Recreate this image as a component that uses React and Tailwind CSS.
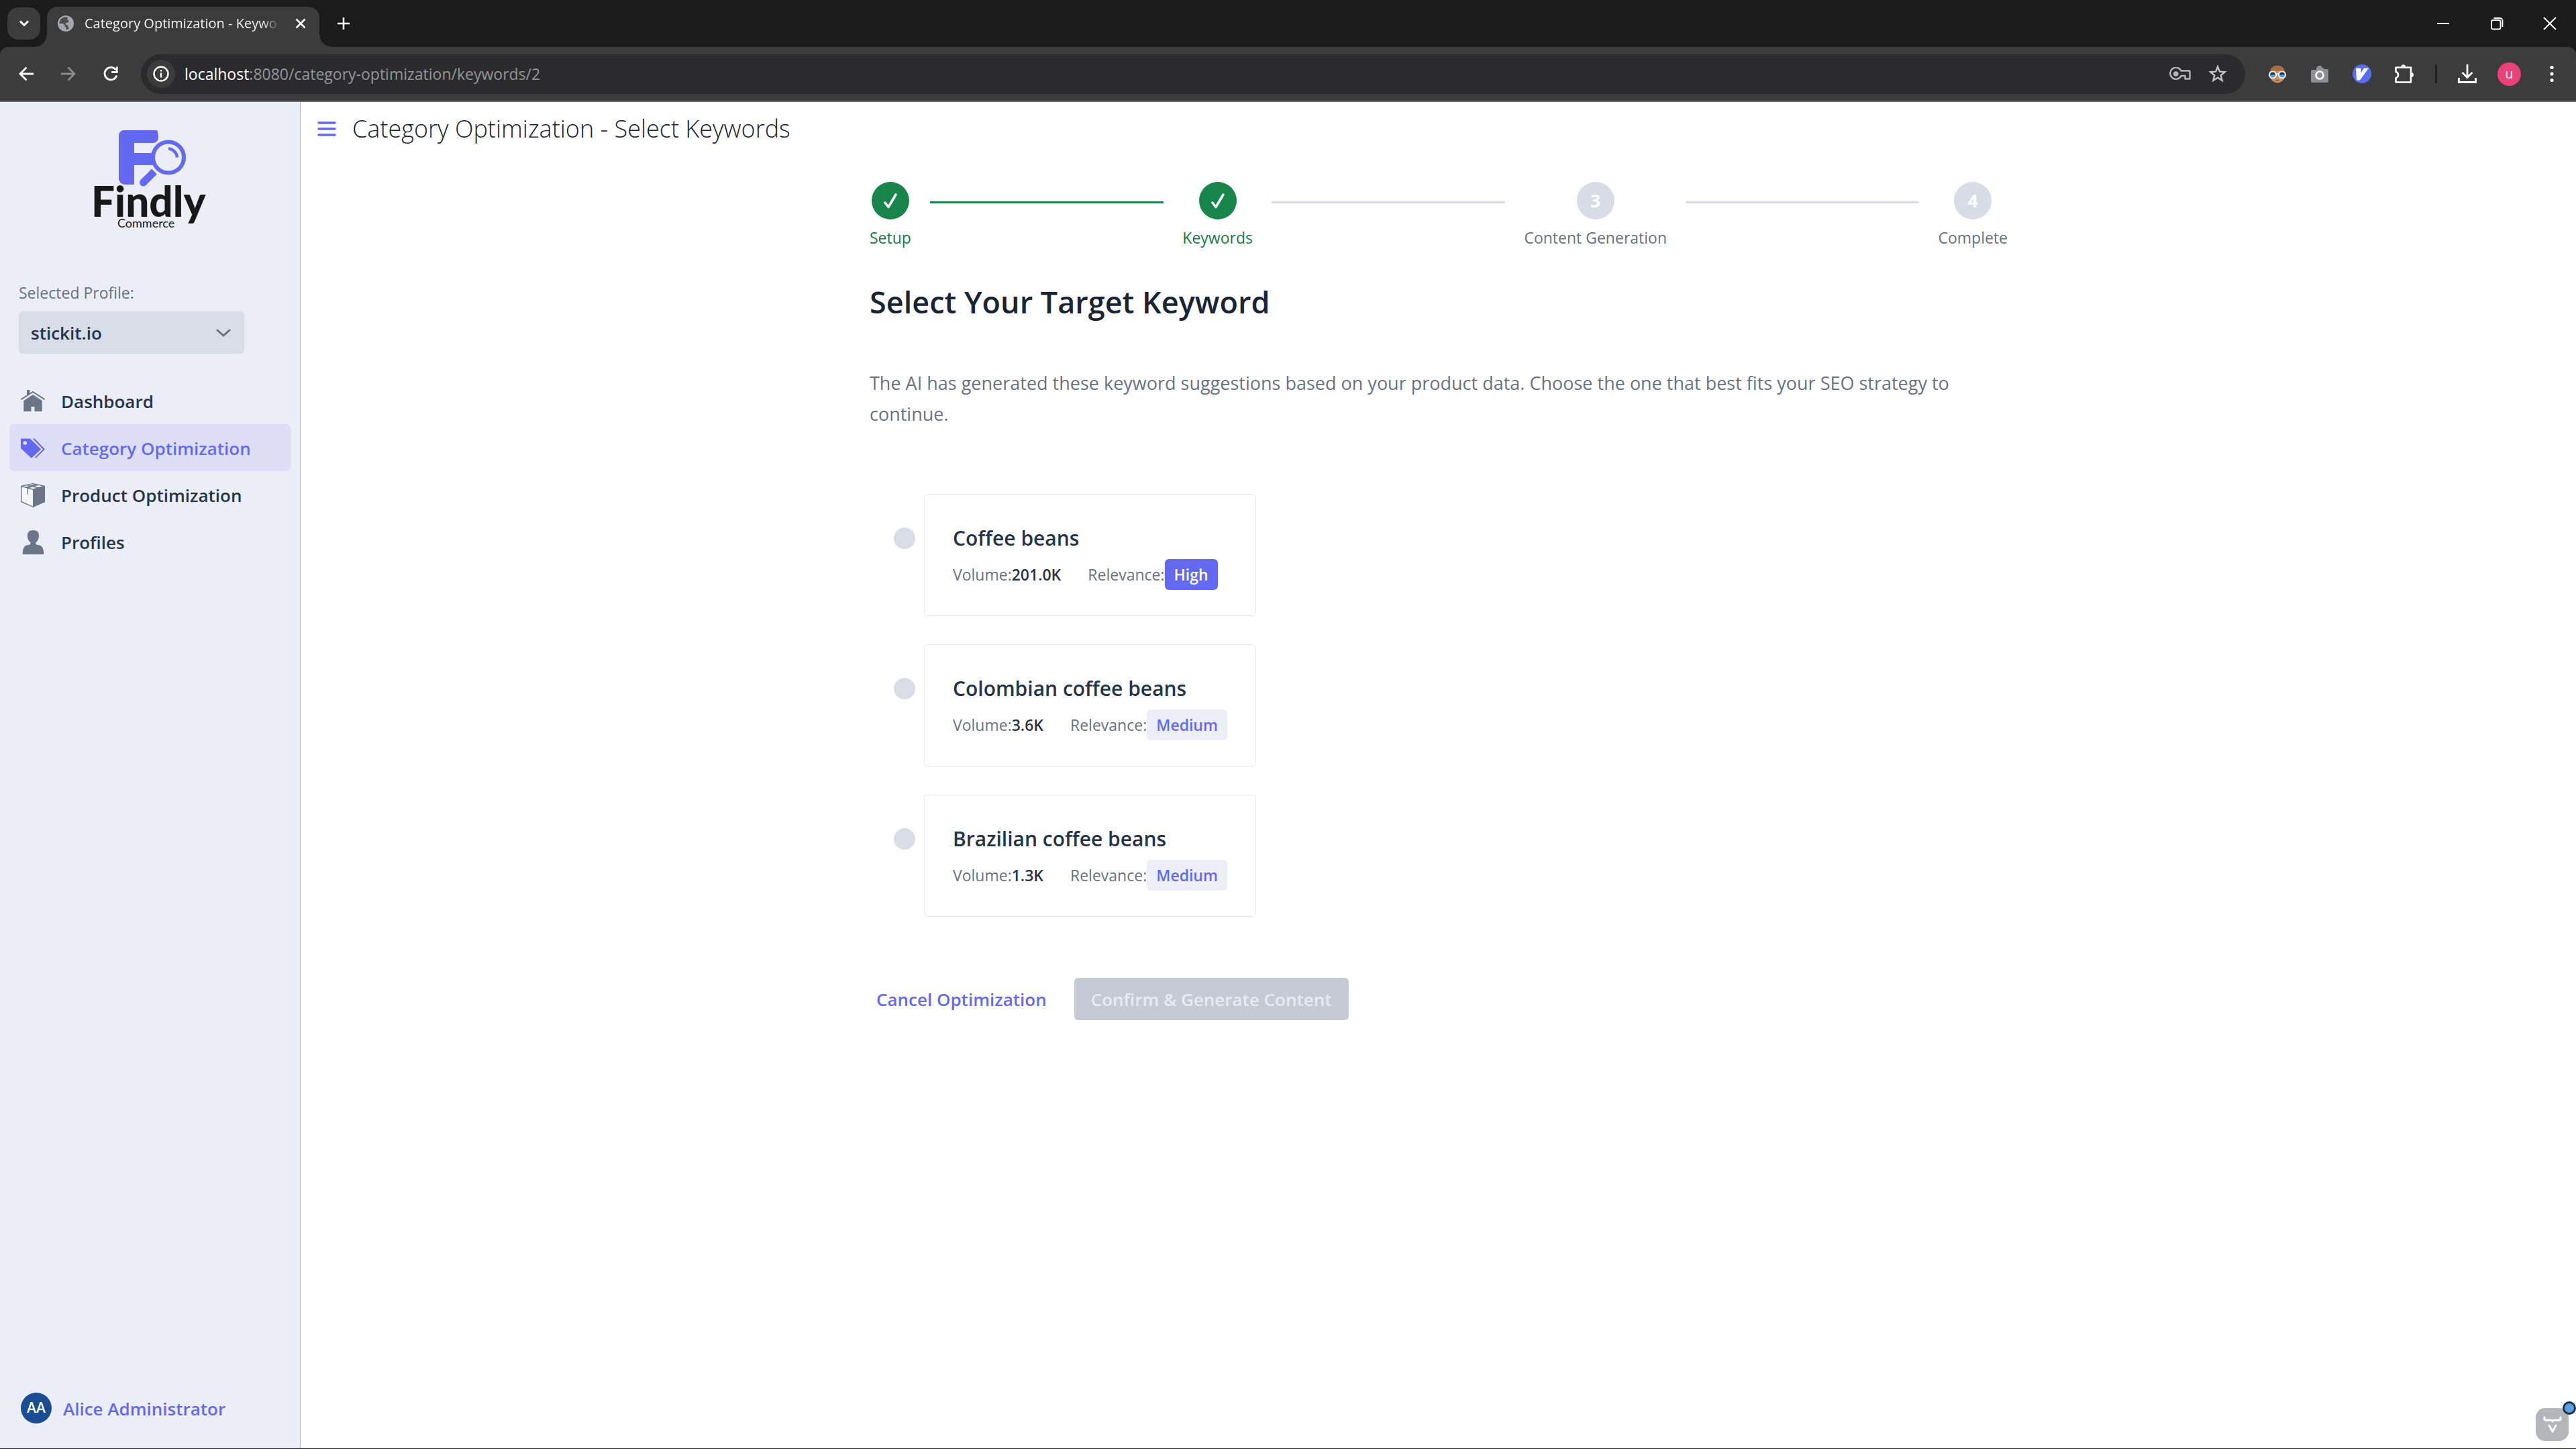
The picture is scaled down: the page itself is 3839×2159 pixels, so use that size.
import { Fragment, useState } from "react";
import clsx from "clsx";

const NAV = [
  { label: "Dashboard", href: "#dashboard", icon: HomeIcon },
  { label: "Category Optimization", href: "#category-optimization", icon: TagsIcon },
  { label: "Product Optimization", href: "#product-optimization", icon: PackageIcon },
  { label: "Profiles", href: "#profiles", icon: UserIcon },
];

const STEPS = [
  { label: "Setup", done: true },
  { label: "Keywords", done: true },
  { label: "Content Generation", done: false },
  { label: "Complete", done: false },
];

const KEYWORDS = [
  { name: "Coffee beans", volume: "201.0K", relevance: "High" },
  { name: "Colombian coffee beans", volume: "3.6K", relevance: "Medium" },
  { name: "Brazilian coffee beans", volume: "1.3K", relevance: "Medium" },
];

/* ---------- sidebar icons ---------- */

function HomeIcon() {
  return (
    <svg viewBox="0 0 16 16" className="size-9" fill="currentColor">
      <path d="M8 1.2 6 2.5V.4H4v3.4L0 6.3l.5.8L8 2.2l7.5 4.9.5-.8z" />
      <path d="M8 3.5 1.9 7.6v7.1h5v-3.2h2.2v3.2h5V7.6z" />
    </svg>
  );
}

function TagsIcon() {
  return (
    <svg viewBox="0 0 16 16" className="size-9" fill="currentColor">
      <path
        fillRule="evenodd"
        d="M0 1.5V8l7.1 6.6 6.3-6-7.2-7.1zm2.8 1.7a1.25 1.25 0 1 1 0 2.5 1.25 1.25 0 0 1 0-2.5z"
      />
      <path d="M7.8 1.5h1.4L16 8.6l-6 6-.6-.6 5.3-5.4z" />
    </svg>
  );
}

function PackageIcon() {
  return (
    <svg viewBox="0 0 16 16" className="size-9">
      <path d="M8 .3.3 1.9v10.3L8 15.6l7.7-3.4V1.9z" fill="#f4f6fa" stroke="currentColor" strokeWidth=".6" />
      <path d="M8 4.1 16 1.9v10.4L8 16z" fill="currentColor" />
      <path
        d="M.3 1.9 8 4.1l7.7-2.2M4.2 1.2l7.6 2M11.8 1 4.6 3v4.4M3.4 2.7 10 .8"
        fill="none"
        stroke="currentColor"
        strokeWidth=".6"
      />
    </svg>
  );
}

function UserIcon() {
  return (
    <svg viewBox="0 0 16 16" className="size-9" fill="currentColor">
      <path d="M8.2 0C5.8 0 4.4 1.2 4.4 3.3c0 1.9.5 3.7 2 4.7v1.1c-.3.5-.9.7-1.9.8C2.2 10.1 1.3 12 1.2 16h14c-.1-4-1-5.9-3.3-6.1-1-.1-1.6-.3-1.900-.8V8c1.500-1 2-2.800 2-4.700C12 1.200 10.600 0 8.200 0z" />
    </svg>
  );
}

function Logo() {
  return (
    <svg viewBox="0 0 176 156" className="mx-auto h-[156px] w-[176px]" role="img" aria-label="Findly Commerce">
      <g fill="#6469f1">
        <rect x="41" y="4" width="23" height="81" rx="9" />
        <rect x="52" y="30" width="12" height="55" />
        <rect x="41" y="4" width="59" height="19" rx="8" />
        <rect x="80" y="4" width="19" height="9" rx="2" />
      </g>
      <circle cx="115" cy="44.5" r="28.5" fill="#ebeef6" />
      <path d="M55 38h37v18H55z" fill="#6469f1" />
      <circle cx="115" cy="44.5" r="23" fill="#ebeef6" stroke="#6469f1" strokeWidth="6" />
      <path d="M115 31.5a14 14 0 0 1 13 13" fill="none" stroke="#6469f1" strokeWidth="4.5" />
      <path d="m94 65.5-16.500 16.500" stroke="#6469f1" strokeWidth="11" />
      <circle cx="77.5" cy="82" r="5.5" fill="#6469f1" />
      <text x="0" y="133" className="font-[Lato] text-[62px] font-black" fill="#181818">Findly</text>
      <text x="39" y="149" className="font-[Lato] text-[18px]" fill="#181818">Commerce</text>
    </svg>
  );
}

/* ---------- browser frame ---------- */

function IconButton({ label, className, children }) {
  return (
    <button type="button" aria-label={label} className={clsx("flex h-[58px] items-center justify-center", className)}>
      {children}
    </button>
  );
}

function TabStrip() {
  return (
    <div className="flex h-[70px] bg-[#1b1b1b] text-white">
      <button
        type="button"
        aria-label="Search tabs"
        className="mt-[11px] ml-[11px] flex h-12 w-[49px] items-center justify-center rounded-[16px] bg-[#3c3c3c]"
      >
        <svg viewBox="0 0 16 16" className="size-4" fill="none" stroke="currentColor" strokeWidth="3">
          <path d="m2 4.5 6 6 6-6" />
        </svg>
      </button>
      <div className="-ml-2 size-[18px] self-end bg-[radial-gradient(circle_at_0_0,transparent_17px,#3c3c3c_18px)]" />
      <div className="mt-[10px] flex w-[406px] items-center rounded-t-[16px] bg-[#3c3c3c] pb-[10px] pl-4">
        <svg viewBox="0 0 24 24" className="size-6 shrink-0">
          <circle cx="12" cy="12" r="12" fill="#a3a6aa" />
          <path
            d="M12 2.500C6 2.500 2.500 7 2.500 12l5 .2 3 1.800v2.500l2 1v4l4-1.500-1-4.500-4-2.500 1-2 3-.5 1.500-2.500-3-2 1-3z"
            fill="#4c4e52"
          />
        </svg>
        <span className="ml-4 w-[292px] overflow-hidden bg-linear-to-r from-white from-90% to-transparent bg-clip-text text-[20px] whitespace-nowrap text-transparent">
          Category Optimization - Keywo
        </span>
        <button type="button" aria-label="Close tab" className="ml-[21px] flex size-[18px] items-center justify-center">
          <svg viewBox="0 0 16 16" className="size-4" stroke="currentColor" strokeWidth="2.5">
            <path d="m1.500 1.500 13 13m0-13-13 13" />
          </svg>
        </button>
      </div>
      <div className="size-[18px] self-end bg-[radial-gradient(circle_at_100%_0,transparent_17px,#3c3c3c_18px)]" />
      <button type="button" aria-label="New tab" className="ml-2 flex w-5 items-center justify-center">
        <svg viewBox="0 0 20 20" className="size-5" stroke="currentColor" strokeWidth="2.5">
          <path d="M10 1v18M1 10h18" />
        </svg>
      </button>
      <div className="ml-auto flex">
        <button type="button" aria-label="Minimize" className="flex w-20 items-center justify-center">
          <svg viewBox="0 0 20 20" className="size-5" stroke="currentColor" strokeWidth="2">
            <path d="M1 10h18" />
          </svg>
        </button>
        <button type="button" aria-label="Restore" className="flex w-20 items-center justify-center">
          <svg viewBox="0 0 20 20" className="size-5" fill="none" stroke="currentColor" strokeWidth="1.8">
            <rect x="2" y="5" width="13.5" height="13.5" rx="2.5" />
            <path d="M5.5 2h9a4 4 0 0 1 4 4v9" />
          </svg>
        </button>
        <button type="button" aria-label="Close" className="flex w-[78px] items-center justify-center">
          <svg viewBox="0 0 20 20" className="size-5" stroke="currentColor" strokeWidth="1.8">
            <path d="m1 1 18 18m0-18L1 19" />
          </svg>
        </button>
      </div>
    </div>
  );
}

function Toolbar() {
  return (
    <div className="bg-[#1b1b1b]">
      <div className="flex h-[82px] items-center rounded-t-[12px] border-b-2 border-[#6a6a6a] bg-[#3c3c3c] pr-[5px] pl-[7px] text-white">
        <IconButton label="Back" className="w-[63px]">
          <svg viewBox="0 0 24 24" className="size-6" fill="none" stroke="currentColor" strokeWidth="2.8">
            <path d="M23 12H3m9.500-9.500L3 12l9.500 9.500" />
          </svg>
        </IconButton>
        <IconButton label="Forward" className="w-[63px] text-[#8b8c8f]">
          <svg viewBox="0 0 24 24" className="size-6" fill="none" stroke="currentColor" strokeWidth="2.8">
            <path d="M1 12h20m-9.500-9.500L21 12l-9.500 9.500" />
          </svg>
        </IconButton>
        <IconButton label="Reload" className="w-[63px]">
          <svg viewBox="0 0 24 24" className="size-6" fill="none" stroke="currentColor" strokeWidth="2.8">
            <path d="M21 14.500A9.200 9.200 0 1 1 19.500 6" />
            <path d="M21.200 1.500v8h-8" />
          </svg>
        </IconButton>

        <div className="ml-[14px] flex h-[59px] flex-1 items-center rounded-full bg-[#2b2b2d] pr-[13px] pl-[9px]">
          <button
            type="button"
            aria-label="Site information"
            className="flex size-[42px] items-center justify-center rounded-full bg-[#3c3c3c]"
          >
            <svg viewBox="0 0 24 24" className="size-6" fill="none" stroke="currentColor" strokeWidth="2.4">
              <circle cx="12" cy="12" r="10.5" />
              <path d="M12 10.500v7M12 6v2.600" />
            </svg>
          </button>
          <div className="ml-[14px] flex-1 text-[23px] text-[#94959a]">
            <span className="text-white">localhost</span>:8080/category-optimization/keywords/2
          </div>
          <IconButton label="Passwords" className="w-14 text-[#b6b8bb]">
            <svg viewBox="0 0 32 20" className="h-5 w-8" fill="none" stroke="currentColor" strokeWidth="2.4">
              <path
                d="M17.500 5.500H29a1.500 1.500 0 0 1 1.500 1.500v10.500h-7V13h-6A8.600 8.600 0 1 1 17.500 5.500z"
                strokeLinejoin="round"
              />
              <circle cx="9.7" cy="10" r="3.8" fill="currentColor" stroke="none" />
            </svg>
          </IconButton>
          <IconButton label="Bookmark this page" className="w-14 text-[#c4c6c9]">
            <svg viewBox="0 0 28 28" className="size-7" fill="none" stroke="currentColor" strokeWidth="2.4">
              <path d="m14 3.500 2.900 7.200 7.800.6-6 5 1.900 7.500-6.600-4.100-6.600 4.100 1.900-7.500-6-5 7.800-.6z" />
            </svg>
          </IconButton>
        </div>

        <IconButton label="Reader extension" className="ml-4 w-[63px]">
          <svg viewBox="0 0 28 28" className="size-7">
            <ellipse cx="14" cy="15" rx="11.5" ry="12.5" fill="#c98f63" />
            <path d="M2.500 12C3.500 5 8 1.500 14 1.500S24.500 5 25.500 12l-6-2.500h-11z" fill="#a86f47" />
            <circle cx="7" cy="15.5" r="4.8" fill="#5b9bd0" />
            <circle cx="21" cy="15.5" r="4.8" fill="#5b9bd0" />
            <path d="M2.200 15.500a4.800 4.800 0 0 1 9.600 0zM16.200 15.500a4.800 4.800 0 0 1 9.600 0z" fill="#2b3d55" />
            <circle cx="7" cy="15.5" r="5" fill="none" stroke="#e9eef3" strokeWidth="2.2" />
            <circle cx="21" cy="15.5" r="5" fill="none" stroke="#e9eef3" strokeWidth="2.2" />
            <path d="M12 14.500h4" stroke="#e9eef3" strokeWidth="2" />
            <path d="M11.500 23.500h5" stroke="#8c4f37" strokeWidth="1.5" />
          </svg>
        </IconButton>
        <IconButton label="Screenshot extension" className="w-[63px]">
          <svg viewBox="0 0 28 28" className="size-7">
            <path
              d="M3 8h6V5l3-3h4l2 3h2v2h5a2 2 0 0 1 2 2v16a2 2 0 0 1-2 2H3a2 2 0 0 1-2-2V10a2 2 0 0 1 2-2z"
              fill="#8e9095"
            />
            <circle cx="14" cy="16" r="5.5" fill="#8e9095" stroke="#fff" strokeWidth="2.6" />
          </svg>
        </IconButton>
        <IconButton label="Vimium extension" className="w-[63px]">
          <svg viewBox="0 0 28 28" className="size-7">
            <circle cx="14" cy="14" r="14" fill="#5a6cf0" />
            <path d="M5 5.500h7.500V12.500L17 5.500h7L11 23.500H6z" fill="#fff" />
          </svg>
        </IconButton>
        <IconButton label="Extensions" className="w-[63px]">
          <svg
            viewBox="0 0 28 28"
            className="size-7"
            fill="none"
            stroke="currentColor"
            strokeWidth="2.6"
            strokeLinejoin="round"
          >
            <path d="M1.500 4.500h22.500v22H1.500v-6.500q3.500-1 3.500-4.500t-3.500-4.500z" />
            <path
              d="M9.500 3.500a3.200 3.200 0 0 1 6.400 0zM24.500 12a3.400 3.400 0 0 1 0 6.800z"
              fill="currentColor"
              stroke="none"
            />
          </svg>
        </IconButton>
        <div className="mr-[13px] ml-[15px] h-7 w-[3px] rounded-full bg-[#1f1f20]" />
        <IconButton label="Downloads" className="w-[63px]">
          <svg viewBox="0 0 28 28" className="size-7" fill="none" stroke="currentColor" strokeWidth="2.8">
            <path d="M14 0v19M6.500 12l7.500 7.500 7.500-7.500M1.500 20v6.500h25V20" />
          </svg>
        </IconButton>
        <IconButton label="Account" className="w-[63px]">
          <span className="flex size-[35px] items-center justify-center rounded-full bg-[#ec407a] text-[20px] leading-none">
            u
          </span>
        </IconButton>
        <IconButton label="Menu" className="w-[63px]">
          <svg viewBox="0 0 28 28" className="size-7" fill="currentColor">
            <circle cx="14" cy="4.5" r="2.6" />
            <circle cx="14" cy="14" r="2.6" />
            <circle cx="14" cy="23.5" r="2.6" />
          </svg>
        </IconButton>
      </div>
    </div>
  );
}

/* ---------- application ---------- */

function Sidebar() {
  return (
    <aside className="flex w-[448px] shrink-0 flex-col border-r border-[#a9acf0] bg-[#ebeef6] pt-[38px]">
      <Logo />

      <div className="mt-[71px] ml-7 w-[336px]">
        <label htmlFor="profile" className="block text-[23px] leading-[38px] text-[#687280]">
          Selected Profile:
        </label>
        <div className="relative mt-[9px]">
          <select
            id="profile"
            className="h-[63px] w-full appearance-none rounded-md bg-[#d9dde7] px-[18px] pt-0.5 text-[26px] font-semibold text-[#263448]"
          >
            <option>stickit.io</option>
          </select>
          <svg
            viewBox="0 0 22 12"
            className="pointer-events-none absolute top-[26px] right-5 h-3 w-[22px] text-[#687384]"
            fill="none"
            stroke="currentColor"
            strokeWidth="3"
            strokeLinecap="round"
          >
            <path d="m2 2 9 8 9-8" />
          </svg>
        </div>
      </div>

      <nav className="mx-[14px] mt-[35px]">
        {NAV.map(({ label, href, icon: Icon }) => {
          const active = label === "Category Optimization";
          return (
            <a
              key={label}
              href={href}
              className={clsx(
                "flex h-[70px] items-center gap-6 rounded-md pt-0.5 pl-[17px] text-[26px] font-semibold",
                active ? "bg-[#dedff7] text-[#6469f1]" : "text-[#263448]"
              )}
            >
              <span className={active ? "text-[#6469f1]" : "text-[#6b7587]"}>
                <Icon />
              </span>
              {label}
            </a>
          );
        })}
      </nav>

      <button type="button" className="mt-auto mb-[37px] ml-[31px] flex items-center gap-[17px]">
        <span className="flex size-[46px] items-center justify-center rounded-full bg-[#1a4d93] text-[21px] font-semibold text-white">
          AA
        </span>
        <span className="pt-0.5 text-[26px] font-semibold text-[#6469f1]">Alice Administrator</span>
      </button>
    </aside>
  );
}

function Stepper() {
  return (
    <div className="flex items-start gap-7">
      {STEPS.map((step, i) => (
        <Fragment key={step.label}>
          {i > 0 && (
            <div className={clsx("mt-[29px] h-[3px] flex-1", i === 1 ? "bg-[#18854a]" : "bg-[#d8dce7]")} />
          )}
          <StepMarker step={step} number={i + 1} />
        </Fragment>
      ))}
    </div>
  );
}

function StepMarker({ step, number }) {
  return (
    <div className="flex flex-col items-center gap-2">
      <span
        className={clsx(
          "flex size-14 items-center justify-center rounded-full text-[26px] font-bold text-white",
          step.done ? "bg-[#18854a]" : "bg-[#d8dce7]"
        )}
      >
        {step.done ? (
          <svg
            viewBox="0 0 24 24"
            className="size-6"
            fill="none"
            stroke="currentColor"
            strokeWidth="3.5"
            strokeLinecap="round"
            strokeLinejoin="round"
          >
            <path d="m4 15 5 6.500L20 3" />
          </svg>
        ) : (
          number
        )}
      </span>
      <span className={clsx("text-[23px] leading-[38px]", step.done ? "text-[#18794a]" : "text-[#687280]")}>
        {step.label}
      </span>
    </div>
  );
}

function KeywordOption({ keyword, selected, onSelect }) {
  const id = `keyword-${keyword.name.toLowerCase().replace(/\s+/g, "-")}`;
  return (
    <div className="flex items-start gap-[13px]">
      <input
        id={id}
        type="radio"
        name="keyword"
        checked={selected}
        onChange={onSelect}
        className="mt-[50px] size-8 shrink-0 appearance-none rounded-full bg-[#d9dde7] checked:border-[10px] checked:border-[#6469f1] checked:bg-white"
      />
      <label htmlFor={id} className="flex-1 rounded-md border border-[#e6e8ee] px-[42px] pt-[42px] pb-[38px]">
        <span className="block text-[30px] leading-[46px] font-semibold text-[#263448]">{keyword.name}</span>
        <span className="mt-2 flex items-center gap-10 text-[23px] text-[#687280]">
          <span>
            Volume:<span className="font-semibold text-[#263448]">{keyword.volume}</span>
          </span>
          <span className="flex items-center">
            Relevance:
            <span
              className={clsx(
                "rounded-md px-[14px] leading-[46px] font-semibold",
                keyword.relevance === "High" ? "bg-[#6469f1] text-white" : "bg-[#eceef8] text-[#6469f1]"
              )}
            >
              {keyword.relevance}
            </span>
          </span>
        </span>
      </label>
    </div>
  );
}

export default function App() {
  const [selected, setSelected] = useState(null);

  return (
    <div className="flex min-h-screen flex-col border-b border-[#1b1b1b] bg-white font-['Open_Sans',sans-serif]">
      <TabStrip />
      <Toolbar />

      <div className="relative flex flex-1">
        <Sidebar />

        <main className="flex-1 pr-6 pl-[25px]">
          <header className="flex h-20 items-center gap-6">
            <button type="button" aria-label="Toggle menu" className="text-[#6469f1]">
              <svg viewBox="0 0 28 24" className="h-6 w-7" stroke="currentColor" strokeWidth="3.5" strokeLinecap="round">
                <path d="M2 3h24M2 12h24M2 21h24" />
              </svg>
            </button>
            <h1 className="text-[36px] leading-[46px] font-light text-[#192434]">
              Category Optimization - Select Keywords
            </h1>
          </header>

          <div className="mx-auto max-w-[1696px] pt-[39px]">
            <Stepper />

            <h2 className="mt-[47px] text-[45px] leading-[60px] font-semibold text-[#192434]">
              Select Your Target Keyword
            </h2>
            <p className="mt-[68px] text-[27px] leading-[46px] text-[#687280]">
              The AI has generated these keyword suggestions based on your product data. Choose the one that best fits
              your SEO strategy to continue.
            </p>

            <div className="mt-24 ml-9 flex w-fit flex-col gap-[42px]">
              {KEYWORDS.map((k) => (
                <KeywordOption
                  key={k.name}
                  keyword={k}
                  selected={selected === k.name}
                  onSelect={() => setSelected(k.name)}
                />
              ))}
            </div>

            <div className="mt-[91px] flex gap-[31px] text-[26px] font-semibold">
              <button type="button" className="h-[63px] px-[10px] pt-0.5 text-[#6469f1]">
                Cancel Optimization
              </button>
              <button
                type="button"
                disabled={!selected}
                className="h-[63px] rounded-md bg-[#6469f1] px-[25px] pt-0.5 text-white disabled:bg-[#c5cad5] disabled:text-[#e8ebf2]"
              >
                Confirm &amp; Generate Content
              </button>
            </div>
          </div>
        </main>

        {/* dev tools launcher, floats over the page corner */}
        <button
          type="button"
          aria-label="Vaadin Copilot"
          className="absolute right-[11px] bottom-[11px] flex size-[49px] items-center justify-center rounded-[14px] bg-[#b3b7bc]"
        >
          <svg
            viewBox="0 0 28 28"
            className="size-7"
            fill="none"
            stroke="#fff"
            strokeWidth="3"
            strokeLinecap="round"
            strokeLinejoin="round"
          >
            <path d="M2 3v2.500q0 1.500 2 1.500h8q2 0 2 2 0-2 2-2h8q2 0 2-1.500V3" />
            <path d="m9 15 5 9 5-9" />
          </svg>
          <span className="absolute -top-[10px] -right-[11px] size-5 rounded-full border-[3px] border-[#223047] bg-[#5b9fe0]" />
        </button>
      </div>
    </div>
  );
}
